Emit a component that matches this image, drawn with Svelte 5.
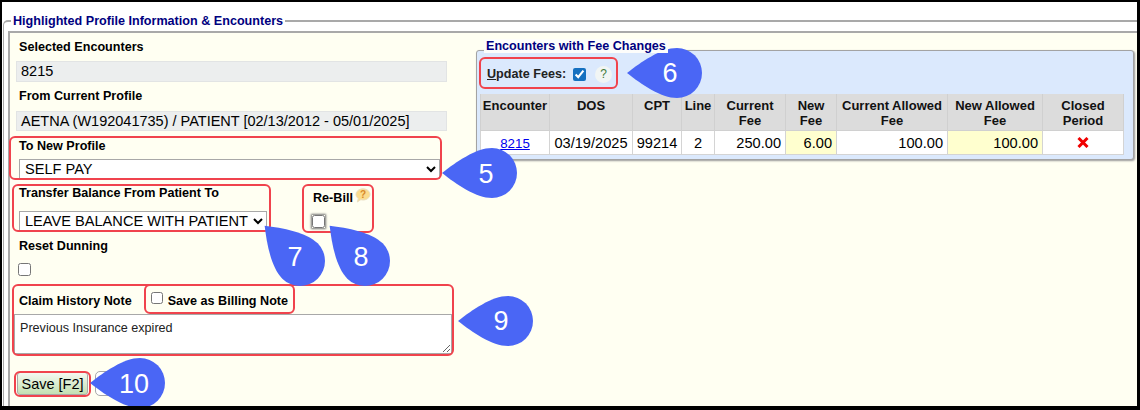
<script>
	const columns = [
		{ label: 'Encounter', width: 69 },
		{ label: 'DOS', width: 83 },
		{ label: 'CPT', width: 49 },
		{ label: 'Line', width: 33 },
		{ label: 'Current Fee', width: 71 },
		{ label: 'New Fee', width: 51 },
		{ label: 'Current Allowed Fee', width: 111 },
		{ label: 'New Allowed Fee', width: 95 },
		{ label: 'Closed Period', width: 81 }
	];

	const marks = [
		{ x: 10, y: 137, w: 431, h: 42 },
		{ x: 13, y: 185, w: 257, h: 46 },
		{ x: 303, y: 185, w: 70, h: 47 },
		{ x: 13, y: 285, w: 440, h: 70 },
		{ x: 145, y: 285, w: 149, h: 28 },
		{ x: 480, y: 58, w: 137, h: 30 },
		{ x: 15, y: 372, w: 75, h: 24 }
	];

	const callouts = [
		{ n: 5, x: 492, y: 173, angle: 0, tx: 486, ty: 183 },
		{ n: 6, x: 677, y: 73, angle: 0, tx: 670, ty: 82 },
		{ n: 7, x: 300, y: 261, angle: 45, tx: 295, ty: 266 },
		{ n: 8, x: 365, y: 261, angle: 45, tx: 361, ty: 266 },
		{ n: 9, x: 508, y: 321, angle: 0, tx: 501, ty: 330 },
		{ n: 10, x: 140, y: 383, angle: 0, tx: 134, ty: 393 }
	];
</script>

<div class="frame">
	<fieldset class="outer">
		<legend>Highlighted Profile Information &amp; Encounters</legend>
		<div class="panel">
			<div class="left">
				<div class="label first">Selected Encounters</div>
				<div class="readonly tall">8215</div>
				<div class="label">From Current Profile</div>
				<div class="readonly">AETNA (W192041735) / PATIENT [02/13/2012 - 05/01/2025]</div>
				<div class="label new-profile">To New Profile</div>
				<select class="profile">
					<option>SELF PAY</option>
				</select>

				<div class="transfer-row">
					<div class="transfer">
						<div class="label">Transfer Balance From Patient To</div>
						<select class="balance">
							<option>LEAVE BALANCE WITH PATIENT</option>
						</select>
					</div>
					<div class="rebill">
						<div class="rebill-label">
							Re-Bill
							<svg class="bubble" width="16" height="15" viewBox="0 0 16 15">
								<path d="M8 .8c3.800 0 7 2.500 7 5.600s-3.200 5.600-7 5.600c-.8 0-1.500-.1-2.200-.3L2.300 14l1-3.500C1.800 9.500 1 8 1 6.400 1 3.300 4.200.8 8 .8z" fill="#fbdc8e" stroke="#eadfc4" />
								<text x="8" y="10" text-anchor="middle" class="bubble-mark">?</text>
							</svg>
						</div>
						<input type="checkbox" class="rebill-check" />
					</div>
				</div>

				<div class="label dunning">Reset Dunning</div>
				<input type="checkbox" class="dunning-check" />

				<div class="note-row">
					<span class="label-inline">Claim History Note</span>
					<input type="checkbox" class="note-check" />
					<span class="label-inline">Save as Billing Note</span>
				</div>
				<textarea class="note">Previous Insurance expired</textarea>

				<div class="actions">
					<button class="save">Save [F2]</button>
					<button class="other">&nbsp;</button>
				</div>
			</div>

			<div class="right">
				<div class="fee-title"><span>Encounters with Fee Changes</span></div>
				<div class="fee-panel">
					<div class="update">
						<span class="update-label"><u>U</u>pdate Fees:</span>
						<input type="checkbox" checked />
						<span class="help">?</span>
					</div>
					<table>
						<colgroup>
							{#each columns as col}
								<col style="width: {col.width}px" />
							{/each}
						</colgroup>
						<thead>
							<tr>
								{#each columns as col}
									<th>{col.label}</th>
								{/each}
							</tr>
						</thead>
						<tbody>
							<tr>
								<td class="center"><a href="#8215">8215</a></td>
								<td class="center">03/19/2025</td>
								<td class="center">99214</td>
								<td class="center">2</td>
								<td class="num">250.00</td>
								<td class="num changed">6.00</td>
								<td class="num">100.00</td>
								<td class="num changed">100.00</td>
								<td class="center closed">
									<svg width="12" height="11" viewBox="0 0 12 11">
										<path d="M1.500 1 10.500 10M10.500 1 1.500 10" stroke="#f00000" stroke-width="3" />
									</svg>
								</td>
							</tr>
						</tbody>
					</table>
				</div>
			</div>
		</div>
	</fieldset>

	<svg class="overlay" width="1140" height="410" viewBox="0 0 1140 410">
		{#each marks as m}
			<rect x={m.x} y={m.y} width={m.w} height={m.h} rx="5" class="mark" />
		{/each}
		{#each callouts as c}
			<path
				class="drop"
				transform="translate({c.x} {c.y}) rotate({c.angle})"
				d="M-50 0C-36-11-16-25 0-25A25 25 0 0 1 0 25C-16 25-36 11-50 0Z"
			/>
			<text class="drop-num" x={c.tx} y={c.ty} text-anchor="middle">{c.n}</text>
		{/each}
	</svg>
</div>

<style>
	:global(body) {
		margin: 0;
		background: #fff;
	}

	.frame {
		position: relative;
		box-sizing: border-box;
		width: 1140px;
		height: 410px;
		overflow: hidden;
		border-top: 2px solid #000;
		border-left: 2px solid #000;
		border-right: 3px solid #000;
		border-bottom: 4px solid #000;
		font-family: "Liberation Sans", Arial, sans-serif;
		color: #000;
	}

	.outer {
		margin: 12px 0 0 1px;
		padding: 3px 0 0 4px;
		border: 0;
		border-top: 2px solid #a9a9a9;
		border-left: 1px solid #a9a9a9;
		border-top-left-radius: 5px;
		min-width: 0;
	}

	legend {
		margin-left: 3px;
		padding: 0 2px;
		font-size: 12.6px;
		font-weight: bold;
		line-height: 14px;
		color: #000080;
	}

	.panel {
		display: flex;
		height: 380px;
		background: #fffff2;
		border-top: 2px solid #a9a9a9;
		border-left: 2px solid #a9a9a9;
	}

	.left {
		width: 466px;
		flex: none;
		box-sizing: border-box;
		padding-left: 9px;
	}

	.label,
	.label-inline,
	.rebill-label {
		font-size: 12.6px;
		font-weight: bold;
		line-height: 14px;
	}

	.label {
		margin-top: 7px;
	}

	.label.new-profile {
		margin-top: 8px;
	}

	.readonly {
		box-sizing: border-box;
		width: 431px;
		height: 20px;
		margin: 8px 0 0 -3px;
		padding-left: 4px;
		background: #eceeee;
		border: 1px solid #e2e4e4;
		font-size: 14.5px;
		line-height: 18px;
	}

	.readonly.tall {
		height: 21px;
		margin-top: 7px;
		line-height: 19px;
	}

	select {
		display: block;
		box-sizing: border-box;
		height: 20px;
		padding: 0 0 0 1px;
		background: #fff;
		border: 1px solid #a8a8a8;
		border-radius: 0;
		font-family: inherit;
		font-size: 14.6px;
		color: #000;
	}

	.profile {
		width: 421px;
		margin-top: 6px;
	}

	.transfer-row {
		display: flex;
	}

	.balance {
		width: 248px;
		margin-top: 11px;
	}

	.rebill {
		margin-left: 44px;
		padding-top: 5px;
	}

	.rebill-label {
		display: flex;
		align-items: flex-start;
		gap: 2px;
		margin: 7px 0 0 2px;
	}

	.bubble {
		margin-top: -3px;
	}

	.bubble-mark {
		font-size: 10px;
		font-weight: bold;
		fill: #d8892a;
	}

	.rebill-check {
		display: block;
		width: 13px;
		height: 13px;
		margin: 10px 0 0 1px;
		box-shadow: 0 0 2px 1px #777;
	}

	.label.dunning {
		margin-top: 8px;
	}

	.dunning-check {
		display: block;
		width: 13px;
		height: 13px;
		margin: 10px 0 0 -1px;
	}

	.note-row {
		display: flex;
		align-items: center;
		height: 14px;
		margin-top: 18px;
	}

	.note-check {
		width: 12px;
		height: 12px;
		margin: -6px 5px 0 19px;
	}

	.note {
		display: block;
		box-sizing: border-box;
		width: 438px;
		height: 40px;
		margin: 6px 0 0 -5px;
		padding: 6px 5px;
		background: #fff;
		border: 1px solid #a8a8a8;
		border-radius: 0;
		font-family: inherit;
		font-size: 12.6px;
		line-height: 14px;
		color: #222;
	}

	.actions {
		display: flex;
		align-items: center;
		gap: 7px;
		margin: 17px 0 0 -2px;
	}

	.save,
	.other {
		box-sizing: border-box;
		padding: 0;
		border: 1px solid #a8a8a8;
		font-family: inherit;
		font-size: 14.5px;
		white-space: nowrap;
		color: #000;
	}

	.save {
		width: 71px;
		height: 23px;
		border-radius: 3px;
		background: linear-gradient(#f4f8f0, #c3e0b2);
	}

	.other {
		width: 30px;
		height: 25px;
		border-radius: 5px;
		background: #fff;
	}

	.right {
		flex: none;
		width: 658px;
		padding-top: 3px;
	}

	.fee-title {
		position: relative;
		z-index: 1;
		height: 14px;
		padding-left: 8px;
	}

	.fee-title span {
		display: inline-block;
		padding: 0 2px;
		background: #fdfdfb;
		font-size: 12.6px;
		font-weight: bold;
		line-height: 14px;
		color: #000080;
	}

	.fee-panel {
		box-sizing: border-box;
		height: 110px;
		padding: 8px 3px 0;
		background: #dbe9fd;
		border: 1px solid #a3a3a3;
		border-radius: 3px;
		box-shadow: 1px 1px 2px #999;
	}

	.update {
		display: flex;
		align-items: center;
		height: 30px;
		padding-left: 7px;
	}

	.update-label {
		font-size: 12.6px;
		font-weight: bold;
		color: #222;
	}

	.update input {
		width: 13px;
		height: 13px;
		margin: 0 0 0 7px;
		accent-color: #1570c0;
	}

	.help {
		display: flex;
		align-items: center;
		justify-content: center;
		width: 17px;
		height: 17px;
		margin-left: 9px;
		background: #f1f5f4;
		border-radius: 50%;
		font-size: 12px;
		color: #3f7a3a;
	}

	table {
		width: 643px;
		margin-top: 5px;
		border-collapse: collapse;
		table-layout: fixed;
		font-size: 14.6px;
	}

	th {
		padding: 4px 0 2px;
		vertical-align: top;
		background: #dcdcdc;
		border: 1px solid #d0d0d0;
		border-top: 0;
		font-size: 13px;
		line-height: 15px;
		color: #111;
	}

	td {
		height: 23px;
		padding: 0 4px 0 0;
		background: #fff;
		border: 1px solid #d4d4d4;
		white-space: nowrap;
	}

	.center {
		text-align: center;
		padding: 0;
	}

	.num {
		text-align: right;
	}

	.changed {
		background: #ffffcf;
	}

	.closed svg {
		display: block;
		margin: 0 auto;
	}

	a {
		color: #0000ee;
		font-size: 13.3px;
	}

	.overlay {
		position: absolute;
		left: -2px;
		top: -2px;
		pointer-events: none;
	}

	.mark {
		fill: none;
		stroke: #f0434d;
		stroke-width: 2;
	}

	.drop {
		fill: #4a66f5;
	}

	.drop-num {
		font-size: 27px;
		fill: #fff;
	}
</style>
